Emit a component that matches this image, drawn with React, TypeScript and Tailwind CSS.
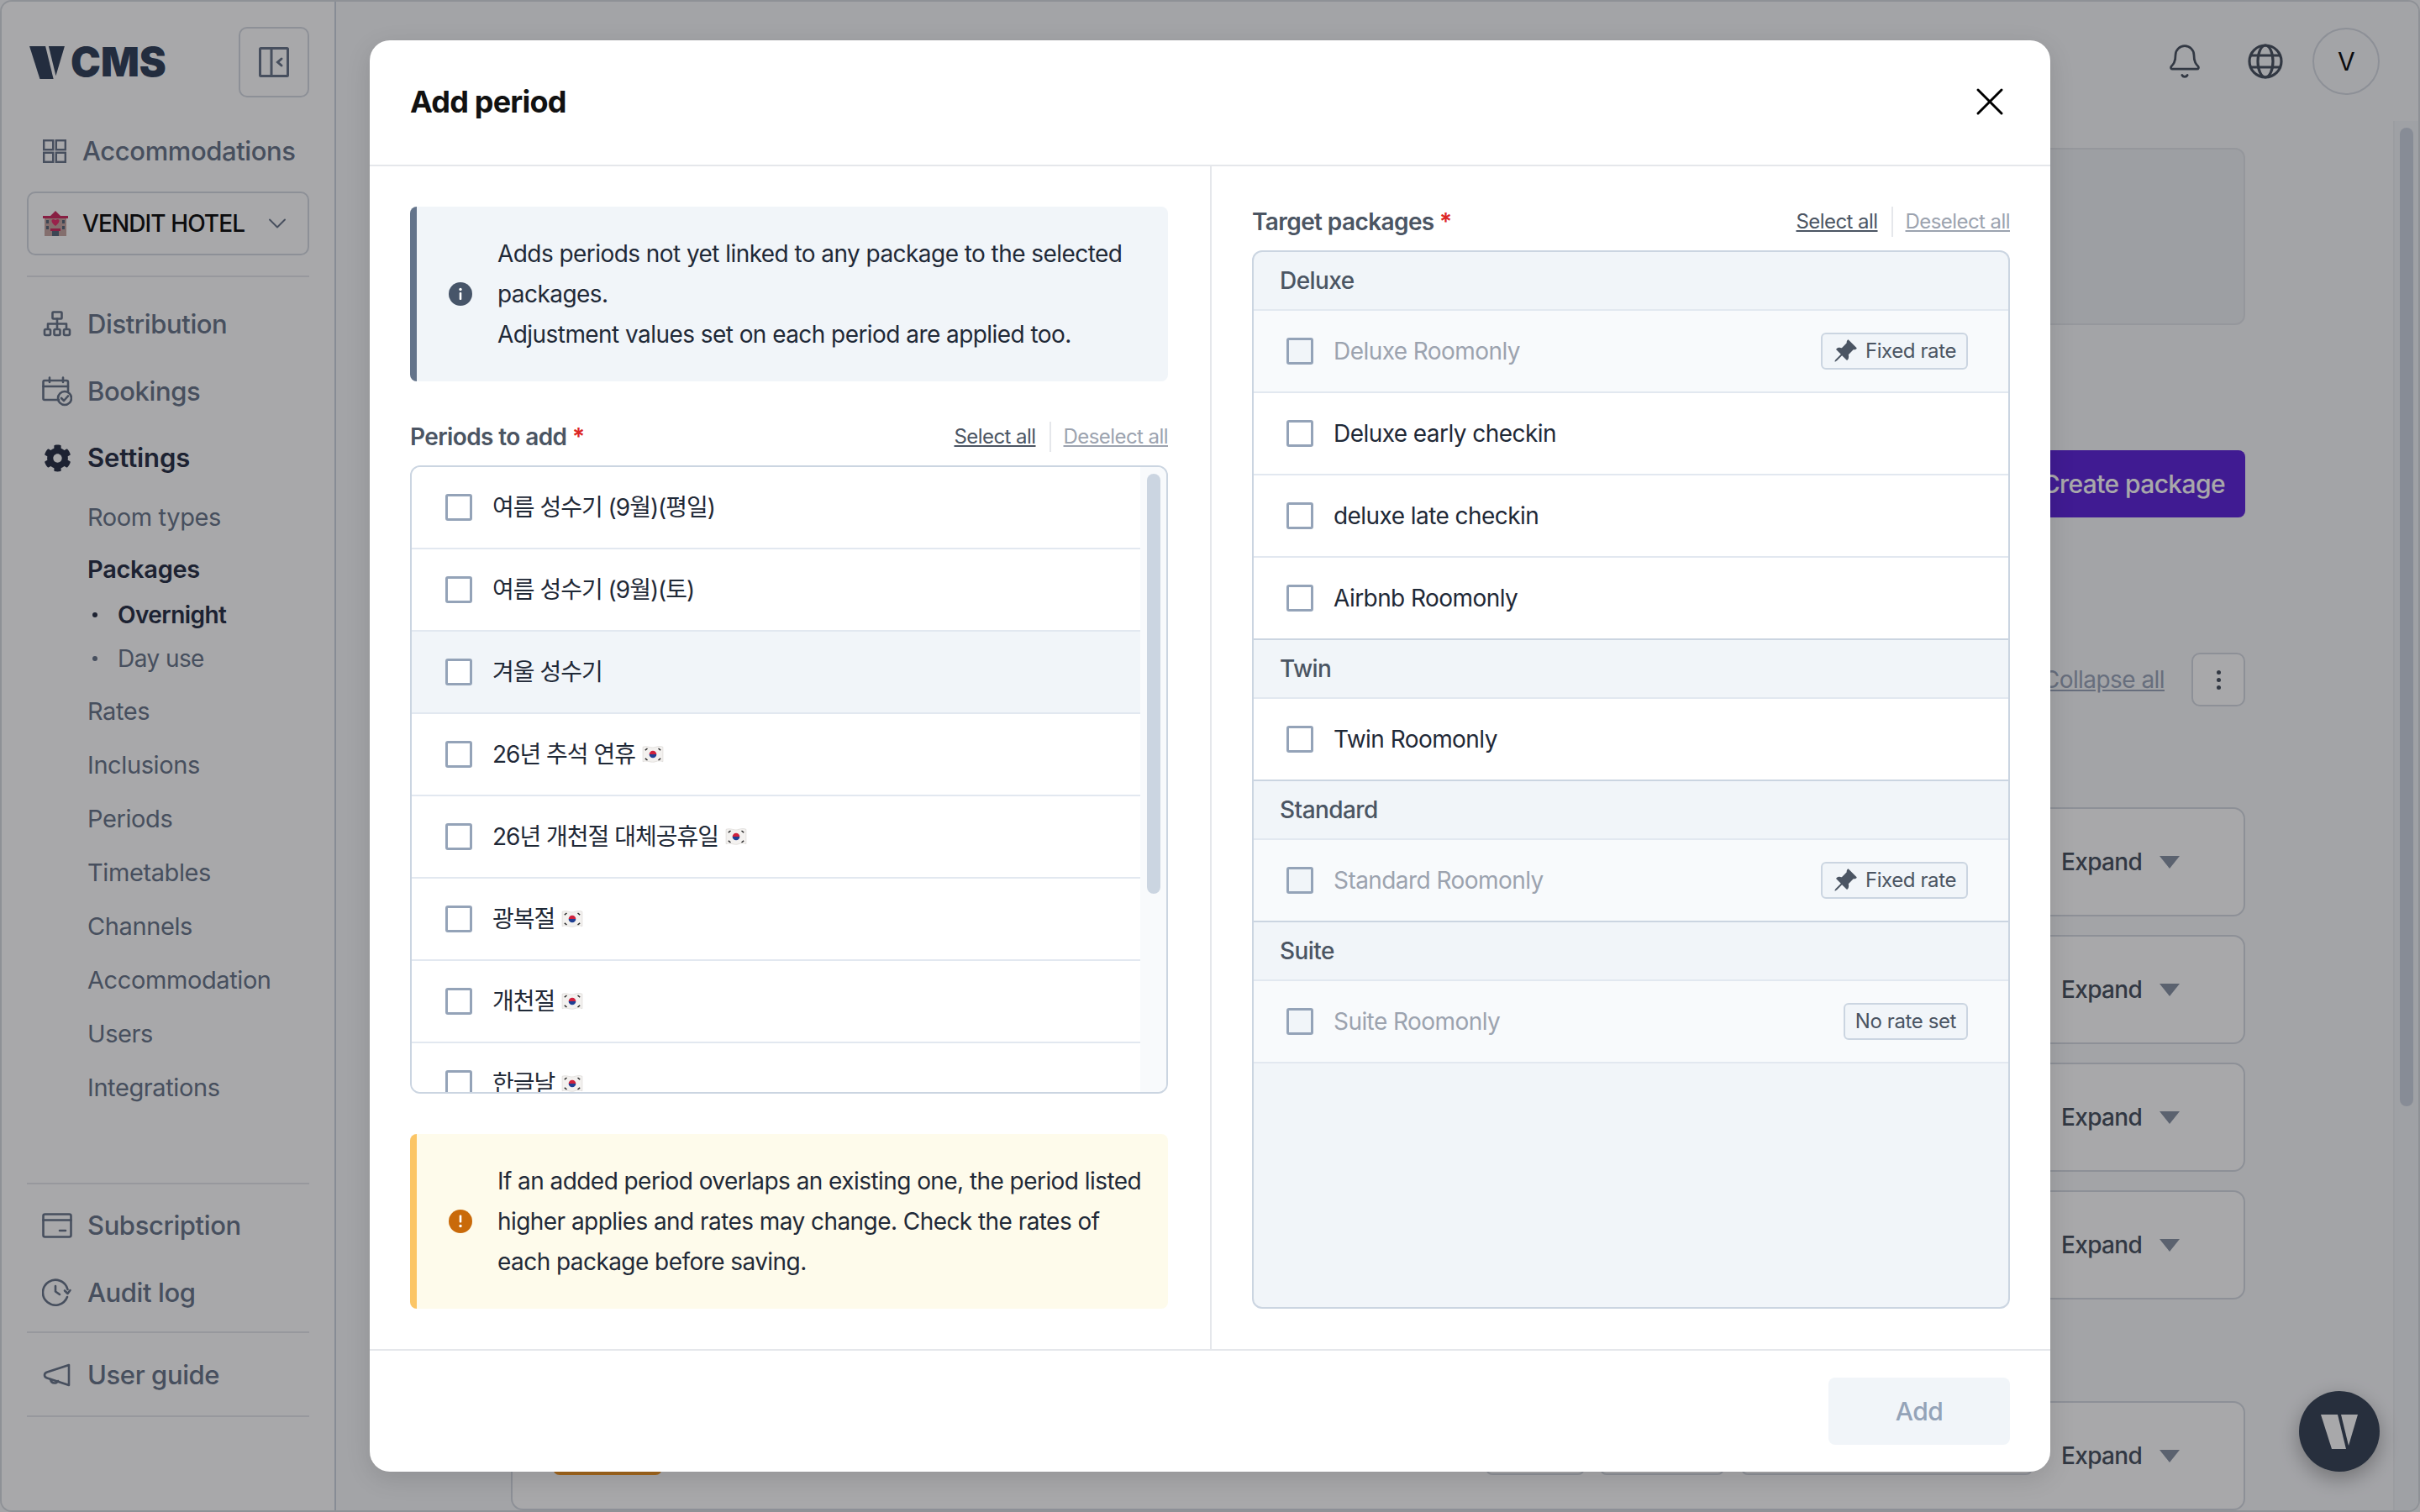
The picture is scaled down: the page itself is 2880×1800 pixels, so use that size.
import { Bell, ChevronDown, X } from "lucide-react";
import { FaCog } from "react-icons/fa";
import { BsPinAngleFill } from "react-icons/bs";

function VMark({ className, color }: { className: string; color: string }) {
  return (
    <svg viewBox="0 0 44 41" className={className} fill={color}>
      <polygon points="0,0 20,0 30,41 13,41" />
      <polygon points="24,0 44,0 33,37" />
    </svg>
  );
}

function Flag() {
  return (
    <svg viewBox="0 0 24 22" className="w-[26px] h-[24px] shrink-0 ml-[8px]">
      <path d="M1 3 C6 1 10 5 15 3 C18 2 21 2 23 3 V19 C20 18 18 18 15 19 C10 21 6 17 1 19 Z" fill="#f3f1ef" stroke="#d9d6d2" strokeWidth="0.6" />
      <path d="M8 11 A4 4 0 0 1 16 11 Z" fill="#d0213d" />
      <path d="M8 11 A4 4 0 0 0 16 11 Z" fill="#1f3f93" />
      <g stroke="#2a2a2a" strokeWidth="1.3">
        <path d="M3.5 6.5 L6 4.5" />
        <path d="M18 4.5 L20.5 6.5" />
        <path d="M3.5 15.5 L6 17.5" />
        <path d="M18 17.5 L20.5 15.5" />
      </g>
    </svg>
  );
}

function Hotel() {
  return (
    <svg viewBox="0 0 32 34" className="w-8 h-[34px] shrink-0">
      <rect x="3" y="8" width="26" height="24" fill="#c9a9a4" />
      <path d="M1 8 H10 L16 2 L22 8 H31 V11 H1 Z" fill="#cf2f62" />
      <path d="M16 20 C9 15 11 10 16 13 C21 10 23 15 16 20 Z" fill="#e8336f" />
      <g fill="#5a6a7c">
        <rect x="5" y="13" width="3" height="4" />
        <rect x="24" y="13" width="3" height="4" />
        <rect x="5" y="20" width="3" height="4" />
        <rect x="24" y="20" width="3" height="4" />
        <rect x="12" y="26" width="8" height="6" />
      </g>
      <rect x="10" y="23" width="12" height="3" fill="#cf2f62" />
    </svg>
  );
}

function SideIcon({ children, w = 36, h = 36 }: { children: React.ReactNode; w?: number; h?: number }) {
  return (
    <svg width={w} height={h} viewBox={`0 0 ${w} ${h}`} fill="none" stroke="#6b788c" strokeWidth="2.6" strokeLinecap="round" strokeLinejoin="round" className="shrink-0">
      {children}
    </svg>
  );
}

function MainItem({ icon, label, active, h = "h-[80px]" }: { icon: React.ReactNode; label: string; active?: boolean; h?: string }) {
  return (
    <div className={`flex items-center ${h}`}>
      <div className="w-[36px] ml-[18px] mr-[18px] flex justify-center shrink-0">{icon}</div>
      <span className={active ? "text-[31px] tracking-[-0.1px] font-semibold text-[#2b3348]" : "text-[31px] tracking-[-0.4px] font-medium text-[#6b788c]"}>{label}</span>
    </div>
  );
}

function SubItem({ label }: { label: string }) {
  return <div className="h-[64px] flex items-center pl-[72px] text-[29px] tracking-[-0.4px] text-[#6b788c]">{label}</div>;
}

function Sidebar() {
  return (
    <aside className="w-[398px] shrink-0 h-full bg-white border-r-2 border-[#cdd5df] pl-[30px] pr-[30px] pt-[30px] flex flex-col">
      <div className="flex items-center justify-between h-[84px]">
        <div className="flex items-center ml-[2px]">
          <VMark className="w-[44px] h-[39px]" color="#35445c" />
          <span className="ml-[6px] text-[48px] leading-none font-black text-[#35445c] tracking-[0px]">CMS</span>
        </div>
        <button className="w-[84px] h-[84px] rounded-[10px] border-2 border-[#d6dbe2] flex items-center justify-center">
          <svg width="36" height="36" viewBox="0 0 36 36" fill="none" stroke="#6b788c" strokeWidth="3">
            <rect x="1.5" y="1.5" width="33" height="33" rx="1" />
            <path d="M15 1.5 V34.5" />
            <path d="M27 14 L22.5 18 L27 22" strokeLinecap="round" />
          </svg>
        </button>
      </div>

      <div className="flex items-center h-[56px] mt-[36px]">
        <svg width="28" height="28" viewBox="0 0 28 28" fill="none" stroke="#6b788c" strokeWidth="2.4" className="ml-[19px] mr-[19px] shrink-0">
          <rect x="1.2" y="1.2" width="11" height="11" />
          <rect x="15.8" y="1.2" width="11" height="11" />
          <rect x="1.2" y="15.8" width="11" height="11" />
          <rect x="15.8" y="15.8" width="11" height="11" />
        </svg>
        <span className="text-[31px] tracking-[-0.4px] font-medium text-[#6b788c]">Accommodations</span>
      </div>

      <div className="h-[76px] mt-[20px] rounded-[10px] border-2 border-[#d6dbe2] flex items-center pl-[16px] pr-[18px]">
        <Hotel />
        <span className="ml-[16px] text-[28px] tracking-[-0.9px] font-medium text-[#111] flex-1">VENDIT HOTEL</span>
        <ChevronDown size={36} color="#6b788c" strokeWidth={1.3} />
      </div>

      <div className="border-t-2 border-[#e5e7eb] mt-[24px]" />

      <div className="mt-[16px]">
        <MainItem
          label="Distribution"
          icon={
            <SideIcon w={34} h={32}>
              <rect x="11.5" y="1.5" width="11" height="8" rx="1" />
              <path d="M17 9.5 V15.5 M6 21 V15.5 H28 V21 M17 15.5 V21" />
              <rect x="2" y="22" width="7" height="7" rx="1.5" />
              <rect x="13.5" y="22" width="7" height="7" rx="1.5" />
              <rect x="25" y="22" width="7" height="7" rx="1.5" />
            </SideIcon>
          }
        />
        <MainItem
          label="Bookings"
          icon={
            <SideIcon w={36} h={36}>
              <path d="M20 28 H3 Q1.5 28 1.5 26.5 V7 Q1.5 5 3 5 H29 Q31 5 31 7 V18" />
              <path d="M1.5 12 H31 M9 1.5 V7 M25 1.5 V7" />
              <circle cx="27" cy="26" r="8" />
              <path d="M23 26 L26 29 L31 23.5" />
            </SideIcon>
          }
        />
        <MainItem label="Settings" active h="h-[78px]" icon={<FaCog size={33} color="#2b3348" />} />
      </div>

      <SubItem label="Room types" />
      <div className="h-[60px] flex items-center pl-[72px] text-[29px] tracking-[-0.3px] font-semibold text-[#2b3348]">Packages</div>
      <div className="h-[48px] flex items-center pl-[78px]">
        <span className="w-[6px] h-[6px] rounded-full bg-[#2b3348] mr-[24px]" />
        <span className="text-[28px] font-semibold text-[#2b3348]">Overnight</span>
      </div>
      <div className="h-[56px] flex items-center pl-[78px] mb-[3px]">
        <span className="w-[6px] h-[6px] rounded-full bg-[#6b788c] mr-[24px]" />
        <span className="text-[28px] text-[#6b788c]">Day use</span>
      </div>
      {["Rates", "Inclusions", "Periods", "Timetables", "Channels", "Accommodation", "Users", "Integrations"].map((s) => (
        <SubItem key={s} label={s} />
      ))}

      <div className="border-t-2 border-[#e5e7eb] mt-[81px]" />
      <div className="mt-[9px]">
        <MainItem
          label="Subscription"
          icon={
            <SideIcon w={36} h={30}>
              <rect x="1.5" y="1.5" width="33" height="27" rx="2" />
              <path d="M1.5 8.5 H34.5 M21 21 H28" />
            </SideIcon>
          }
        />
        <MainItem
          label="Audit log"
          icon={
            <SideIcon w={36} h={34}>
              <path d="M30.5 13 A15 15 0 1 0 30 22" />
              <path d="M33.5 14 L30.5 18 L27 14.5" />
              <path d="M16 9 V15.5 L21 19" />
            </SideIcon>
          }
        />
      </div>
      <div className="border-t-2 border-[#e5e7eb] mt-[6px]" />
      <div className="mt-[10px]">
        <MainItem
          label="User guide"
          icon={
            <SideIcon w={34} h={28}>
              <path d="M31 2 V26 L5 17.5 Q2 16.5 2 14 Q2 11.5 5 10.5 Z" />
              <path d="M9 19 Q10 24 15 23.5 Q17 23 18 21" />
            </SideIcon>
          }
        />
      </div>
      <div className="border-t-2 border-[#e5e7eb] mt-[8px]" />
    </aside>
  );
}

function ExpandRow() {
  return (
    <div className="flex items-center shrink-0">
      <span className="text-[28px] tracking-[-0.7px] font-medium text-[#4b5563]">Expand</span>
      <span className="ml-[21px] w-0 h-0 border-l-[12px] border-r-[12px] border-t-[15px] border-l-transparent border-r-transparent border-t-[#8a94a6]" />
    </div>
  );
}

function Main() {
  return (
    <main className="flex-1 min-w-0 h-full flex flex-col bg-[#f8f9fb]">
      <header className="h-[142px] shrink-0 flex items-center justify-end pr-[46px]">
        <Bell size={44} color="#4b5563" strokeWidth={1.5} />
        <svg width="48" height="48" viewBox="0 0 48 48" fill="none" stroke="#4b5563" strokeWidth="3.2" className="ml-[50px]">
          <circle cx="24" cy="24" r="19" />
          <ellipse cx="24" cy="24" rx="9" ry="19" />
          <path d="M7 17 H41 M7 31 H41" />
        </svg>
        <div className="ml-[32px] w-[80px] h-[80px] rounded-full border-2 border-[#d6dbe2] flex items-center justify-center text-[30px] text-[#111]">V</div>
      </header>
      <div className="flex-1 min-h-0 flex">
        <div className="flex-1 min-w-0 pr-[176px] pl-[208px] pt-[32px]">
          <div className="h-[211px] rounded-[12px] border-2 border-[#e3e6ea] bg-[#eff1f4]" />
          <div className="flex justify-end mt-[149px]">
            <button className="h-[80px] px-[24px] rounded-[8px] bg-[#6029da] text-white text-[30px] tracking-[-0.6px] font-medium">Create package</button>
          </div>
          <div className="flex items-center justify-end gap-[32px] mt-[161px] h-[64px]">
            <span className="text-[28px] text-[#9ca7ba] underline">Collapse all</span>
            <div className="w-[64px] h-[64px] rounded-[10px] border-2 border-[#d6dbe2] bg-white flex flex-col items-center justify-center gap-[4px]">
              <span className="w-[5px] h-[5px] rounded-full bg-[#4b5563]" />
              <span className="w-[5px] h-[5px] rounded-full bg-[#4b5563]" />
              <span className="w-[5px] h-[5px] rounded-full bg-[#4b5563]" />
            </div>
          </div>
          <div className="flex flex-col gap-[22px] mt-[120px]">
            {[0, 1, 2, 3].map((i) => (
              <div key={i} className="h-[130px] rounded-[14px] border-2 border-[#d6dbe2] bg-white flex items-center justify-end pr-[76px]">
                <ExpandRow />
              </div>
            ))}
          </div>
          <div className="h-[130px] mt-[121px] rounded-[14px] border-2 border-[#d6dbe2] bg-white flex items-center pl-[48px] pr-[76px]">
            <span className="w-[130px] h-[46px] rounded-[8px] bg-[#f59a28]" />
            <div className="flex-1" />
            <span className="w-[118px] h-[46px] rounded-[8px] bg-white border-2 border-[#d6dbe2]" />
            <span className="ml-[18px] w-[148px] h-[46px] rounded-[8px] bg-white border-2 border-[#d6dbe2]" />
            <span className="ml-[20px] w-[347px] h-[46px] rounded-[8px] bg-white border-2 border-[#d6dbe2]" />
            <div className="ml-[34px]">
              <ExpandRow />
            </div>
          </div>
        </div>
        <div className="w-[30px] shrink-0 h-full border-l-2 border-[#eceef1] bg-[#f2f4f7] pl-[6px] pt-[8px]">
          <div className="w-[16px] h-[1165px] rounded-full bg-[#cdd4e0]" />
        </div>
      </div>
    </main>
  );
}

function Check({ disabled }: { disabled?: boolean }) {
  return <span className={`w-8 h-8 shrink-0 rounded-[3px] border-[3px] border-[#94a3b8] ${disabled ? "bg-[#f1f5f9]" : "bg-white"}`} />;
}

function SelectLinks() {
  return (
    <div className="flex items-center text-[24px] leading-[36px]">
      <span className="underline text-[#4b5563] pr-[16px]">Select all</span>
      <span className="underline text-[#9ca3af] pl-[15px] border-l-2 border-[#e5e7eb] decoration-[#9ca3af]">Deselect all</span>
    </div>
  );
}

function FieldLabel({ children }: { children: string }) {
  return (
    <div className="flex items-center justify-between h-[36px]">
      <span className="text-[28px] font-semibold tracking-[-0.6px] text-[#4b5563]">
        {children} <span className="text-[#dc2626]">*</span>
      </span>
      <SelectLinks />
    </div>
  );
}

const periods: { t: string; flag?: boolean; hover?: boolean }[] = [
  { t: "여름 성수기 (9월)(평일)" },
  { t: "여름 성수기 (9월)(토)" },
  { t: "겨울 성수기", hover: true },
  { t: "26년 추석 연휴", flag: true },
  { t: "26년 개천절 대체공휴일", flag: true },
  { t: "광복절", flag: true },
  { t: "개천절", flag: true },
  { t: "한글날", flag: true },
];

type Pkg = { t: string; disabled?: boolean; badge?: "fixed" | "none" };
const groups: { name: string; items: Pkg[] }[] = [
  {
    name: "Deluxe",
    items: [
      { t: "Deluxe Roomonly", disabled: true, badge: "fixed" },
      { t: "Deluxe early checkin" },
      { t: "deluxe late checkin" },
      { t: "Airbnb Roomonly" },
    ],
  },
  { name: "Twin", items: [{ t: "Twin Roomonly" }] },
  { name: "Standard", items: [{ t: "Standard Roomonly", disabled: true, badge: "fixed" }] },
  { name: "Suite", items: [{ t: "Suite Roomonly", disabled: true, badge: "none" }] },
];

function Badge({ kind }: { kind: "fixed" | "none" }) {
  return (
    <span className="h-[44px] rounded-[6px] border-2 border-[#cbd5e1] bg-[#f1f5f9] flex items-center pl-[12px] pr-[12px] text-[24px] tracking-[-0.4px] text-[#4b5563]">
      {kind === "fixed" && <BsPinAngleFill size={30} color="#4b5563" className="mr-[9px]" />}
      {kind === "fixed" ? "Fixed rate" : "No rate set"}
    </span>
  );
}

function Modal() {
  return (
    <div className="w-[2000px] h-[1704px] bg-white rounded-[24px] flex flex-col overflow-hidden shadow-[0_8px_30px_rgba(0,0,0,0.12)]">
      <div className="h-[150px] shrink-0 border-b-2 border-[#e5e7eb] flex items-center justify-between pl-[48px] pr-[44px] pb-[2px]">
        <span className="text-[36px] font-bold tracking-[-0.8px] text-[#111]">Add period</span>
        <X size={56} color="#000" strokeWidth={1.3} />
      </div>
      <div className="flex-1 min-h-0 flex">
        <div className="w-[1000px] shrink-0 pl-[48px] pr-[50px] pt-[48px] pb-[48px] flex flex-col">
          <div className="h-[208px] shrink-0 rounded-[8px] border-l-[8px] border-[#64748b] bg-[#f1f5f9] flex items-center pl-[38px] pr-[24px]">
            <svg width="28" height="28" viewBox="0 0 28 28" className="shrink-0 mr-[30px]">
              <circle cx="14" cy="14" r="14" fill="#475569" />
              <rect x="12.7" y="12" width="2.6" height="9" rx="1" fill="#fff" />
              <circle cx="14" cy="8.5" r="1.7" fill="#fff" />
            </svg>
            <p className="text-[28px] leading-[48px] text-[#1f2937]">
              Adds periods not yet linked to any package to the selected packages.
              <br />
              Adjustment values set on each period are applied too.
            </p>
          </div>
          <div className="mt-[48px]">
            <FieldLabel>Periods to add</FieldLabel>
          </div>
          <div className="mt-[16px] h-[748px] shrink-0 rounded-[12px] border-2 border-[#cbd5e1] overflow-hidden flex">
            <div className="w-[867px] shrink-0 h-full overflow-hidden">
              {periods.map((p) => (
                <div key={p.t} className={`h-[98px] border-b-2 border-[#e2e8f0] flex items-center pl-[40px] ${p.hover ? "bg-[#f1f5f9]" : "bg-white"}`}>
                  <Check />
                  <span className="ml-[24px] text-[28px] tracking-[-1px] text-[#1f2937]">{p.t}</span>
                  {p.flag && <Flag />}
                </div>
              ))}
            </div>
            <div className="w-[31px] shrink-0 bg-[#f8fafc] pl-[8px] pt-[8px]">
              <div className="w-[16px] h-[500px] rounded-full bg-[#cbd5e1]" />
            </div>
          </div>
          <div className="mt-[48px] h-[208px] shrink-0 rounded-[8px] border-l-[8px] border-[#fbc565] bg-[#fefbeb] flex items-center pl-[38px] pr-[24px]">
            <svg width="28" height="28" viewBox="0 0 28 28" className="shrink-0 mr-[30px]">
              <circle cx="14" cy="14" r="14" fill="#c96a0a" />
              <rect x="12.7" y="6.5" width="2.6" height="9" rx="1" fill="#fff" />
              <circle cx="14" cy="19.5" r="1.7" fill="#fff" />
            </svg>
            <p className="text-[28px] leading-[48px] text-[#1f2937]">
              If an added period overlaps an existing one, the period listed higher applies and rates may change. Check the rates of each package before saving.
            </p>
          </div>
        </div>
        <div className="flex-1 min-w-0 border-l-2 border-[#e5e7eb] pl-[48px] pr-[48px] pt-[48px] pb-[48px] flex flex-col">
          <FieldLabel>Target packages</FieldLabel>
          <div className="mt-[16px] flex-1 min-h-0 rounded-[12px] border-2 border-[#cbd5e1] bg-[#f1f5f9] overflow-hidden">
            {groups.map((g, gi) => (
              <div key={g.name}>
                <div className="h-[70px] border-b-2 border-[#e2e8f0] flex items-center pl-[31px] text-[28px] font-medium text-[#4b5563]">{g.name}</div>
                {g.items.map((it, ii) => {
                  const last = ii === g.items.length - 1 && gi < groups.length - 1;
                  return (
                    <div
                      key={it.t}
                      className={`h-[98px] border-b-2 flex items-center pl-[39px] pr-[48px] ${last ? "border-[#cbd5e1]" : "border-[#e2e8f0]"} ${it.disabled ? "bg-[#f8fafc]" : "bg-white"}`}
                    >
                      <Check disabled={it.disabled} />
                      <span className={`ml-[24px] flex-1 text-[28px] ${it.disabled ? "text-[#9ca3af]" : "text-[#1f2937]"}`}>{it.t}</span>
                      {it.badge && <Badge kind={it.badge} />}
                    </div>
                  );
                })}
              </div>
            ))}
          </div>
        </div>
      </div>
      <div className="h-[146px] shrink-0 border-t-2 border-[#e5e7eb] flex justify-end pt-[32px] pr-[48px]">
        <button className="w-[216px] h-[80px] rounded-[8px] bg-[#f1f5f9] text-[30px] font-medium text-[#94a3b8]">Add</button>
      </div>
    </div>
  );
}

export default function App() {
  return (
    <div className="relative w-[2880px] h-[1800px] overflow-hidden bg-[#f8f9fb] tracking-[-0.56px] [font-family:Inter,'Noto_Sans_CJK_KR',sans-serif]">
      <div className="w-full h-full rounded-[14px] border-2 border-[#d8dce1] overflow-hidden flex">
        <Sidebar />
        <Main />
      </div>
      <div className="absolute left-[2736px] top-[1656px] w-[96px] h-[96px] rounded-full bg-[#3a4759] flex items-center justify-center shadow-[0_8px_24px_rgba(0,0,0,0.3)]">
        <VMark className="w-[44px] h-[41px]" color="#fff" />
      </div>
      <div className="absolute inset-0 bg-[rgba(2,3,8,0.345)] flex justify-center pt-[48px]">
        <Modal />
      </div>
    </div>
  );
}
